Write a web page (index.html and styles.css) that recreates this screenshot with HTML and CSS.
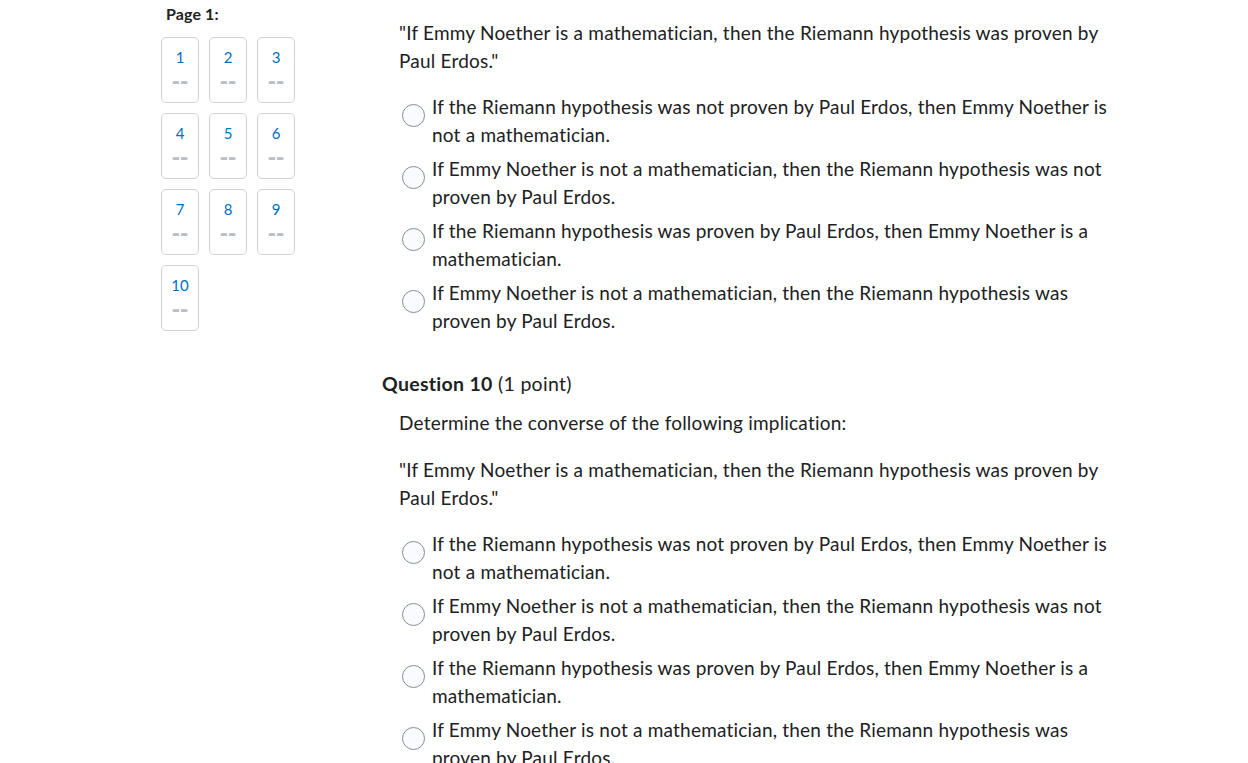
FILE: index.html
```html
<!DOCTYPE html>
<html>
<head>
<meta charset="utf-8">
<link rel="stylesheet" href="styles.css">
</head>
<body>
<div class="page">
  <aside class="nav">
    <div class="nav-title">Page 1:</div>
    <div class="grid">
      <div class="qbox"><span class="num">1</span><span class="dash">--</span></div>
      <div class="qbox"><span class="num">2</span><span class="dash">--</span></div>
      <div class="qbox"><span class="num">3</span><span class="dash">--</span></div>
      <div class="qbox"><span class="num">4</span><span class="dash">--</span></div>
      <div class="qbox"><span class="num">5</span><span class="dash">--</span></div>
      <div class="qbox"><span class="num">6</span><span class="dash">--</span></div>
      <div class="qbox"><span class="num">7</span><span class="dash">--</span></div>
      <div class="qbox"><span class="num">8</span><span class="dash">--</span></div>
      <div class="qbox"><span class="num">9</span><span class="dash">--</span></div>
      <div class="qbox"><span class="num">10</span><span class="dash">--</span></div>
    </div>
  </aside>
  <main class="main">
    <section class="question">
      <div class="body">
        <p class="quote">"If Emmy Noether is a mathematician, then the Riemann hypothesis was proven by Paul Erdos."</p>
        <div class="options">
          <label class="opt"><span class="radio"></span><span class="opt-text">If the Riemann hypothesis was not proven by Paul Erdos, then Emmy Noether is not a mathematician.</span></label>
          <label class="opt"><span class="radio"></span><span class="opt-text">If Emmy Noether is not a mathematician, then the Riemann hypothesis was not proven by Paul Erdos.</span></label>
          <label class="opt"><span class="radio"></span><span class="opt-text">If the Riemann hypothesis was proven by Paul Erdos, then Emmy Noether is a mathematician.</span></label>
          <label class="opt"><span class="radio"></span><span class="opt-text">If Emmy Noether is not a mathematician, then the Riemann hypothesis was proven by Paul Erdos.</span></label>
        </div>
      </div>
    </section>
    <section class="question q10">
      <h2 class="qhead"><strong>Question 10</strong> <span class="pts">(1 point)</span></h2>
      <div class="body">
        <p class="prompt">Determine the converse of the following implication:</p>
        <p class="quote">"If Emmy Noether is a mathematician, then the Riemann hypothesis was proven by Paul Erdos."</p>
        <div class="options">
          <label class="opt"><span class="radio"></span><span class="opt-text">If the Riemann hypothesis was not proven by Paul Erdos, then Emmy Noether is not a mathematician.</span></label>
          <label class="opt"><span class="radio"></span><span class="opt-text">If Emmy Noether is not a mathematician, then the Riemann hypothesis was not proven by Paul Erdos.</span></label>
          <label class="opt"><span class="radio"></span><span class="opt-text">If the Riemann hypothesis was proven by Paul Erdos, then Emmy Noether is a mathematician.</span></label>
          <label class="opt"><span class="radio"></span><span class="opt-text">If Emmy Noether is not a mathematician, then the Riemann hypothesis was proven by Paul Erdos.</span></label>
        </div>
      </div>
    </section>
  </main>
</div>
</body>
</html>
```
FILE: styles.css
```css
html, body {
  margin: 0;
  padding: 0;
  background: #ffffff;
}
body {
  font-family: Lato, "Noto Sans", sans-serif;
  color: #202122;
  overflow: hidden;
  height: 763px;
}
.page {
  display: flex;
  align-items: flex-start;
  padding-left: 161px;
}
.nav {
  width: 221px;
  flex: none;
}
.nav-title {
  font-weight: 700;
  font-size: 16px;
  line-height: 20px;
  padding: 4px 0 0 5px;
  color: #202122;
  letter-spacing: 0.1px;
}
.grid {
  display: grid;
  grid-template-columns: repeat(3, 38px);
  grid-auto-rows: 66px;
  column-gap: 10px;
  row-gap: 10px;
  margin-top: 13px;
}
.qbox {
  box-sizing: border-box;
  border: 1px solid #cdd2d7;
  border-radius: 5px;
  display: flex;
  flex-direction: column;
  align-items: center;
  padding-top: 9px;
}
.num {
  color: #006fbf;
  font-size: 15px;
  line-height: 20px;
}
.dash {
  font-family: "DejaVu Sans", sans-serif;
  color: #b9bec2;
  font-size: 20px;
  font-weight: 700;
  line-height: 16px;
  margin-top: 6px;
  letter-spacing: 0;
}
.main {
  width: 740px;
  flex: none;
}
.body {
  padding-left: 17px;
}
p {
  margin: 0;
}
.question {
  padding-top: 19px;
  letter-spacing: 0.2px;
}
.quote, .prompt {
  font-size: 19px;
  line-height: 28px;
}
.prompt {
  margin-bottom: 19px;
}
.options {
  display: flex;
  flex-direction: column;
  gap: 6px;
  margin-top: 18px;
}
.opt {
  display: flex;
  align-items: flex-start;
  font-size: 19px;
  line-height: 28px;
}
.radio {
  flex: none;
  box-sizing: border-box;
  width: 23px;
  height: 23px;
  border: 1px solid #868c94;
  border-radius: 50%;
  background: #f9fbff;
  margin: 11px 7px 0 3px;
}
.q10 {
  padding-top: 35px;
}
.qhead {
  margin: 0 0 11px 0;
  font-size: 19.5px;
  line-height: 28px;
  font-weight: 400;
  letter-spacing: 0.3px;
}
.qhead strong {
  font-weight: 700;
}
```
